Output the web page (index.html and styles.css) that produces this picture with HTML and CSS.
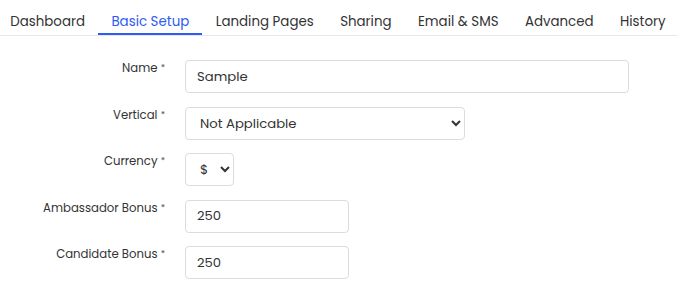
FILE: index.html
```html
<!DOCTYPE html>
<html lang="en">
<head>
  <meta charset="UTF-8">
  <title>Campaign Setup</title>
  <link rel="stylesheet" href="styles.css">
</head>
<body>
  <nav class="tabs">
    <a class="tab">Dashboard</a>
    <a class="tab active">Basic Setup</a>
    <a class="tab">Landing Pages</a>
    <a class="tab">Sharing</a>
    <a class="tab">Email &amp; SMS</a>
    <a class="tab">Advanced</a>
    <a class="tab">History</a>
  </nav>

  <form class="setup-form">
    <div class="form-row">
      <label class="form-label">Name <span class="req">*</span></label>
      <input class="form-control name-input" type="text" value="Sample">
    </div>
    <div class="form-row">
      <label class="form-label">Vertical <span class="req">*</span></label>
      <select class="form-control vertical-select">
        <option>Not Applicable</option>
      </select>
    </div>
    <div class="form-row">
      <label class="form-label">Currency <span class="req">*</span></label>
      <select class="form-control currency-select">
        <option>$</option>
      </select>
    </div>
    <div class="form-row">
      <label class="form-label">Ambassador Bonus <span class="req">*</span></label>
      <input class="form-control bonus-input" type="text" value="250">
    </div>
    <div class="form-row">
      <label class="form-label">Candidate Bonus <span class="req">*</span></label>
      <input class="form-control bonus-input" type="text" value="250">
    </div>
  </form>
</body>
</html>
```

FILE: styles.css
```css
* {
  box-sizing: border-box;
}

body {
  margin: 0;
  background: #fff;
  color: #212529;
  font-family: 'Poppins', 'Open Sans', sans-serif;
}

.tabs {
  display: flex;
  height: 36px;
  margin-left: -3px;
  border-bottom: 1px solid #e8e8e8;
}

.tab {
  height: 35px;
  padding: 11px 13.2px 0;
  font-size: 13.4px;
  line-height: 22px;
  color: #333;
  border-bottom: 2px solid transparent;
  white-space: nowrap;
  cursor: pointer;
}

.tab.active {
  color: #2f5bf5;
  border-bottom-color: #2f5bf5;
}

.setup-form {
  padding-top: 24px;
}

.form-row {
  display: flex;
  align-items: flex-start;
  margin-bottom: 13.5px;
}

.form-label {
  width: 165px;
  margin-right: 20px;
  padding-top: 1px;
  font-size: 11.7px;
  line-height: 15px;
  text-align: right;
  color: #333;
}

.req {
  font-size: 9px;
  vertical-align: top;
  color: #555;
}

.form-control {
  height: 33px;
  padding: 0 11px;
  font-family: inherit;
  font-size: 13.2px;
  color: #333;
  background: #fff;
  border: 1px solid #dcdcdc;
  border-radius: 4px;
  outline: none;
}

.name-input {
  width: 444px;
}

.vertical-select {
  width: 280px;
  padding-left: 10px;
}

.currency-select {
  width: 49px;
  padding: 0 4px 0 10px;
}

.bonus-input {
  width: 164px;
}
```
